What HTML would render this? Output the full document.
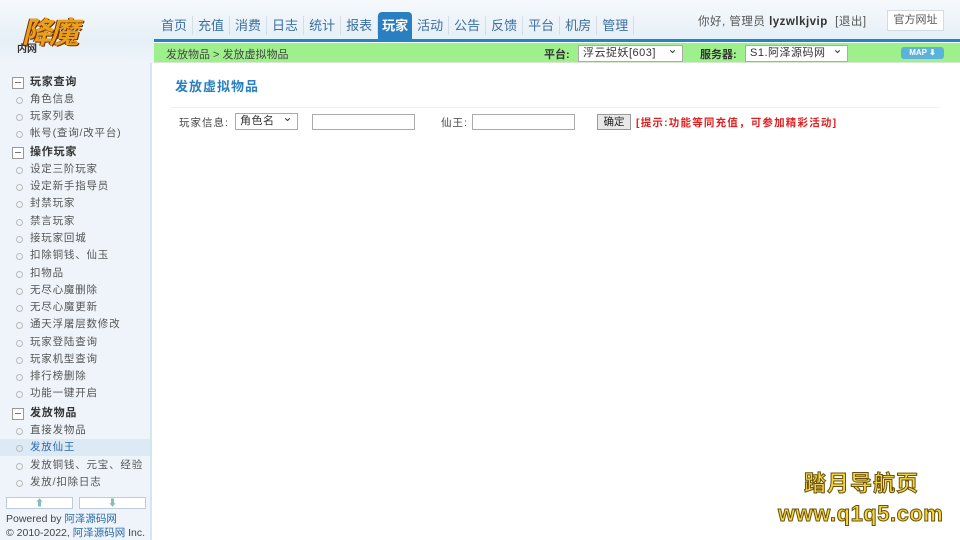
<!DOCTYPE html>
<html><head><meta charset="utf-8"><style>
*{margin:0;padding:0;box-sizing:border-box}
body{width:960px;height:540px;overflow:hidden;background:#fff;font-family:"Liberation Sans","Noto Sans CJK SC",sans-serif;font-size:11px;color:#333;position:relative}
#hd{position:absolute;left:0;top:0;width:960px;height:40px;background:linear-gradient(#f6f9fc,#e6eff7)}
#hdl{position:absolute;left:0;top:40px;width:154px;height:23px;background:linear-gradient(#e6eff7,#eef4fa)}
#line{position:absolute;left:154px;top:39px;width:806px;height:3px;background:#1f86c4}
#logo{position:absolute;left:22px;top:8px;font:bold 30px "Noto Sans CJK SC",sans-serif;color:#e8a21a;text-shadow:1px 1px 0 #7a2a00,-1px 0 0 #7a2a00;letter-spacing:-3px;font-style:italic}
#logo2{position:absolute;left:17px;top:40px;font:bold 10px "Noto Sans CJK SC",sans-serif;color:#333}
#nav{position:absolute;left:156px;top:16px;display:flex}
#nav span{font-size:13px;color:#3a6fa0;padding:0 5px;border-right:1px solid #d5dde5;height:19px;line-height:19px}
#nav span.on{background:#2a7fc0;color:#fff;font-weight:bold;border-radius:4px 4px 0 0;height:28px;margin-top:-4px;line-height:28px;padding:0 4px;border:none}
#usr{position:absolute;left:698px;top:13px;font-size:11.5px;color:#555;letter-spacing:.5px}
#usr b{color:#333}
#gw{position:absolute;left:887px;top:10px;width:57px;height:21px;border:1px solid #d5dbe0;background:#fff;font-size:11px;color:#555;text-align:center;line-height:19px}
#bar{position:absolute;left:154px;top:43px;width:806px;height:20px;background:#9ef08c;border-bottom:1px solid #d8e8d0}
#bar .t{position:absolute;left:12px;top:3px;color:#444}
.sel{position:absolute;top:2px;height:17px;background:#fff;border:1px solid #aaa;font-size:11px;line-height:15px;padding-left:4px;color:#333;letter-spacing:.5px}
.sel:after{content:"⌄";position:absolute;right:4px;top:-4px;font-size:12px}
#map{position:absolute;left:747px;top:4px;width:43px;height:12px;background:#5bb3dc;border-radius:3px;color:#fff;font:bold 8px "Liberation Sans";text-align:center;line-height:12px}
#sb{position:absolute;left:0;top:63px;width:152px;height:477px;background:#eef4fa;border-right:2px solid #d6e4f0;overflow:hidden}
.it{position:absolute;left:0;width:150px;height:17px;line-height:17px;font-size:10.5px;color:#555;padding-left:30px;letter-spacing:.8px;white-space:nowrap}
.it:before{content:"";position:absolute;left:16px;top:6px;width:5px;height:5px;border:1px solid #bbb;border-radius:50%}
.gp{position:absolute;left:0;width:150px;height:18px;line-height:18px;font-size:11px;font-weight:bold;color:#333;padding-left:30px;letter-spacing:.8px}
.gp:before{content:"";position:absolute;left:12px;top:4px;width:10px;height:10px;border:1px solid #999;background:#fff}
.gp:after{content:"";position:absolute;left:15px;top:9px;width:6px;height:1px;background:#777}
.it.on{background:#dde9f5;color:#2a6aa8}
.ab{position:absolute;top:497px;width:67px;height:12px;border:1px solid #bcd;background:#fff;color:#8bb;font-size:9px;text-align:center;line-height:10px}
#ft{position:absolute;left:6px;top:512px;font-size:10.5px;color:#444;line-height:14px;white-space:nowrap}
#ft a{color:#2a6aa8}
#main h2{position:absolute;left:175px;top:76px;font-size:13px;color:#2a7fc0;font-weight:bold;letter-spacing:1px}
#sep{position:absolute;left:170px;top:107px;width:770px;height:1px;background:#f0f0f0}
.lb{position:absolute;top:115px;font-size:10.5px;color:#444;letter-spacing:1px}
.inp{position:absolute;top:114px;width:103px;height:16px;border:1px solid #aaa;background:#fff}
#ok{position:absolute;left:597px;top:114px;width:34px;height:16px;border:1px solid #999;background:#e8e8e8;font-size:10.5px;text-align:center;line-height:14px;color:#222}
#tip{position:absolute;left:636px;top:115px;font-size:10.5px;color:#e02020;font-weight:bold;letter-spacing:1.2px;white-space:nowrap}
#wm1{position:absolute;left:804px;top:466px;font:bold 22px "Noto Sans CJK SC",sans-serif;color:#f4d63a;-webkit-text-stroke:1px #6a5010;letter-spacing:1px}
#wm2{position:absolute;left:778px;top:501px;font:bold 22px "Liberation Sans",sans-serif;color:#f4d63a;-webkit-text-stroke:1px #6a5010;letter-spacing:.5px}
</style></head><body>
<div id="hd"></div><div id="hdl"></div>
<div id="logo">降魔</div><div id="logo2">内网</div>
<div id="nav"><span>首页</span><span>充值</span><span>消费</span><span>日志</span><span>统计</span><span>报表</span><span class="on">玩家</span><span>活动</span><span>公告</span><span>反馈</span><span>平台</span><span>机房</span><span>管理</span></div>
<div id="usr">你好, 管理员 <b>lyzwlkjvip</b> &nbsp;[退出]</div>
<div id="gw">官方网址</div>
<div id="line"></div>
<div id="bar"><span class="t">发放物品 &gt; 发放虚拟物品</span>
<span style="position:absolute;left:390px;top:3px;font-weight:bold;color:#333">平台:</span>
<div class="sel" style="left:424px;width:105px">浮云捉妖[603]</div>
<span style="position:absolute;left:546px;top:3px;font-weight:bold;color:#333">服务器:</span>
<div class="sel" style="left:591px;width:103px">S1.阿泽源码网</div>
<div id="map">MAP ⬇</div></div>
<div id="sb">
<div class="gp" style="top:10px">玩家查询</div>
<div class="it" style="top:28px">角色信息</div>
<div class="it" style="top:45px">玩家列表</div>
<div class="it" style="top:62px">帐号(查询/改平台)</div>
<div class="gp" style="top:80px">操作玩家</div>
<div class="it" style="top:98px">设定三阶玩家</div>
<div class="it" style="top:115px">设定新手指导员</div>
<div class="it" style="top:132px">封禁玩家</div>
<div class="it" style="top:150px">禁言玩家</div>
<div class="it" style="top:167px">接玩家回城</div>
<div class="it" style="top:184px">扣除铜钱、仙玉</div>
<div class="it" style="top:202px">扣物品</div>
<div class="it" style="top:219px">无尽心魔删除</div>
<div class="it" style="top:236px">无尽心魔更新</div>
<div class="it" style="top:253px">通天浮屠层数修改</div>
<div class="it" style="top:271px">玩家登陆查询</div>
<div class="it" style="top:288px">玩家机型查询</div>
<div class="it" style="top:305px">排行榜删除</div>
<div class="it" style="top:322px">功能一键开启</div>
<div class="gp" style="top:341px">发放物品</div>
<div class="it" style="top:359px">直接发物品</div>
<div class="it on" style="top:376px">发放仙王</div>
<div class="it" style="top:394px">发放铜钱、元宝、经验</div>
<div class="it" style="top:411px">发放/扣除日志</div>
</div>
<div class="ab" style="left:6px">⬆</div><div class="ab" style="left:79px">⬇</div>
<div id="ft">Powered by <a>阿泽源码网</a><br>© 2010-2022, <a>阿泽源码网</a> Inc.</div>
<div id="main"><h2>发放虚拟物品</h2></div>
<div id="sep"></div>
<span class="lb" style="left:179px">玩家信息:</span>
<div class="sel" style="left:235px;top:113px;width:63px;height:17px">角色名</div>
<div class="inp" style="left:312px"></div>
<span class="lb" style="left:441px">仙王:</span>
<div class="inp" style="left:472px"></div>
<div id="ok">确定</div>
<div id="tip">[提示:功能等同充值，可参加精彩活动]</div>
<div id="wm1">踏月导航页</div>
<div id="wm2">www.q1q5.com</div>
</body></html>
